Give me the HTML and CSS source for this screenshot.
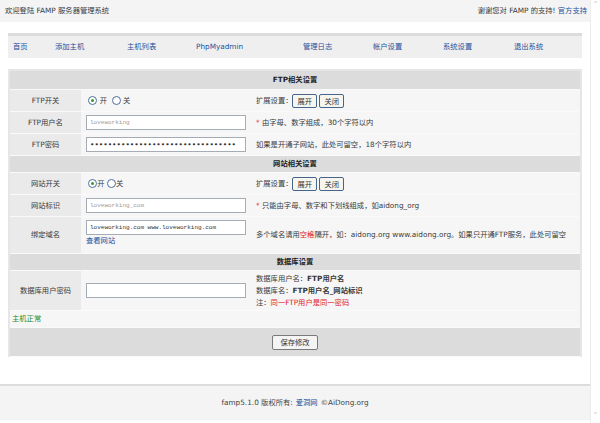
FILE: index.html
```html
<!DOCTYPE html>
<html lang="zh-CN">
<head>
    <meta charset="UTF-8">
    <meta name="viewport" content="width=device-width, initial-scale=1.0">
    <title>FAMP 服务器管理系统</title>
    <link rel="stylesheet" href="styles.css">
</head>
<body>
    <div class="page">
        <div class="main">
            <div class="topbar">
                <span>欢迎登陆 FAMP 服务器管理系统</span>
                <span>谢谢您对 FAMP 的支持! <a href="#">官方支持</a></span>
            </div>

            <ul class="nav">
                <li class="w1"><a href="#">首页</a></li>
                <li class="w2"><a href="#">添加主机</a></li>
                <li class="w3"><a href="#">主机列表</a></li>
                <li class="w4"><a href="#">PhpMyadmin</a></li>
                <li class="w5"><a href="#">管理日志</a></li>
                <li class="w5"><a href="#">帐户设置</a></li>
                <li class="w6"><a href="#">系统设置</a></li>
                <li><a href="#">退出系统</a></li>
            </ul>

            <div class="panel">
                <table class="form">
                    <colgroup>
                        <col class="col-label">
                        <col class="col-field">
                        <col>
                    </colgroup>
                    <tr class="section"><th colspan="3">FTP相关设置</th></tr>
                    <tr class="row">
                        <td class="label">FTP开关</td>
                        <td class="field">
                            &nbsp;<span class="radio checked"></span> 开 &nbsp;<span class="radio"></span> 关
                        </td>
                        <td class="desc">扩展设置：<button class="btn">展开</button> <button class="btn">关闭</button></td>
                    </tr>
                    <tr class="row">
                        <td class="label">FTP用户名</td>
                        <td class="field"><input type="text" class="txt muted" value="loveworking"></td>
                        <td class="desc"><span class="red">*</span> 由字母、数字组成，30个字符以内</td>
                    </tr>
                    <tr class="row">
                        <td class="label">FTP密码</td>
                        <td class="field"><input type="password" class="txt pass" value="123456789012345678901234567890123"></td>
                        <td class="desc">如果是开通子网站，此处可留空，18个字符以内</td>
                    </tr>

                    <tr class="section small"><th colspan="3">网站相关设置</th></tr>
                    <tr class="row">
                        <td class="label">网站开关</td>
                        <td class="field">
                            &nbsp;<span class="radio checked"></span>开 <span class="radio"></span>关
                        </td>
                        <td class="desc">扩展设置：<button class="btn">展开</button> <button class="btn">关闭</button></td>
                    </tr>
                    <tr class="row">
                        <td class="label">网站标识</td>
                        <td class="field"><input type="text" class="txt muted" value="loveworking_com"></td>
                        <td class="desc"><span class="red">*</span> 只能由字母、数字和下划线组成，如aidong_org</td>
                    </tr>
                    <tr class="row tall">
                        <td class="label">绑定域名</td>
                        <td class="field">
                            <input type="text" class="txt" value="loveworking.com www.loveworking.com">
                            <a href="#" class="view">查看网站</a>
                        </td>
                        <td class="desc nowrap">多个域名请用<span class="red">空格</span>隔开，如：aidong.org www.aidong.org。如果只开通FTP服务，此处可留空</td>
                    </tr>

                    <tr class="section small"><th colspan="3">数据库设置</th></tr>
                    <tr class="row db">
                        <td class="label">数据库用户密码</td>
                        <td class="field"><input type="text" class="txt"></td>
                        <td class="desc lines">
                            数据库用户名：<b>FTP用户名</b><br>
                            数据库名：<b>FTP用户名_网站标识</b><br>
                            注：<span class="red">同一FTP用户是同一密码</span>
                        </td>
                    </tr>
                    <tr class="status"><td colspan="3">主机正常</td></tr>
                    <tr class="submit"><td colspan="3"><button class="btn save">保存修改</button></td></tr>
                </table>
            </div>

            <div class="footer">
                famp5.1.0 版权所有: <a href="#">爱洞网</a> ©AiDong.org
            </div>
        </div>
        <div class="scrollbar">
            <span>&#x2c4;</span>
            <span>&#x2c5;</span>
        </div>
    </div>
</body>
</html>
```

FILE: styles.css
```css
body {
    margin: 0;
    background-color: #fff;
    font-family: "DejaVu Sans", "Noto Sans CJK SC", sans-serif;
    font-size: 7.3px;
    line-height: 1.3;
    color: #3a3a3a;
}

a {
    color: #24509c;
    text-decoration: none;
}

.page {
    display: flex;
    height: 423px;
}

.main {
    flex: 1;
}

.scrollbar {
    width: 9px;
    border-left: 1px solid #ececec;
    display: flex;
    flex-direction: column;
    justify-content: space-between;
    align-items: center;
    color: #c8c8c8;
    font-size: 9px;
    line-height: 10px;
    padding-bottom: 2px;
}

.topbar {
    height: 22px;
    display: flex;
    justify-content: space-between;
    align-items: center;
    padding: 0 3px 0 5px;
    background-color: #f4f4f4;
}

.nav {
    list-style: none;
    margin: 11px 8px 0;
    padding: 0 0 0 5px;
    height: 22px;
    display: flex;
    align-items: center;
    border-top: 3px solid #dcdcdc;
    background-color: #efefef;
}

.nav .w1 { width: 42px; }
.nav .w2 { width: 72px; }
.nav .w3 { width: 69px; }
.nav .w4 { width: 107px; }
.nav .w5 { width: 70px; }
.nav .w6 { width: 71px; }

.panel {
    margin: 11px 8px 0;
    border: 2px solid #e6e6e6;
    border-bottom: 0;
}

.form {
    width: 100%;
    border-collapse: collapse;
    table-layout: fixed;
}

.col-label {
    width: 71px;
}

.col-field {
    width: 169px;
}

.form td,
.form th {
    padding: 0;
    border-bottom: 1px solid #fafafa;
}

.section th {
    height: 18px;
    background-color: #dcdcdc;
    font-weight: bold;
    color: #222;
    text-align: center;
}

.section.small th {
    height: 16px;
}

.row td {
    height: 21px;
    background-color: #f6f6f6;
}

.row .label {
    text-align: center;
    background-color: #eaeaea;
}

.row .field {
    padding-left: 5px;
}

.row .desc {
    padding-left: 6px;
}

.desc.nowrap {
    white-space: nowrap;
}

.row.tall td {
    height: 33px;
}

.row.tall .field {
    vertical-align: top;
    padding-top: 3px;
}

.row.db td {
    height: 39px;
}

.desc.lines {
    line-height: 12px;
}

.view {
    display: block;
    margin-top: 1px;
    line-height: 10px;
}

.txt {
    box-sizing: border-box;
    width: 160px;
    height: 15px;
    margin: 0;
    padding: 0 3px;
    border: 1px solid #a5acb5;
    background-color: #fff;
    font-family: "Liberation Mono", monospace;
    font-size: 6px;
    color: #333;
    vertical-align: middle;
}

.txt.muted {
    color: #9a9a9a;
}

.txt.pass {
    font-family: "DejaVu Sans", sans-serif;
    font-size: 7.5px;
    letter-spacing: 0;
}

.radio {
    display: inline-block;
    width: 7px;
    height: 7px;
    border: 1px solid #4d6f98;
    border-radius: 50%;
    background-color: #fff;
    vertical-align: -2px;
    position: relative;
}

.radio.checked::after {
    content: "";
    position: absolute;
    left: 2px;
    top: 2px;
    width: 3px;
    height: 3px;
    border-radius: 50%;
    background-color: #2f9a2f;
}

.btn {
    height: 14px;
    padding: 0 4px;
    margin: 0;
    border: 1px solid #45658c;
    border-radius: 2px;
    background-color: #f6f5ee;
    font-family: inherit;
    font-size: 7.3px;
    color: #333;
    vertical-align: middle;
}

.red {
    color: #e0202a;
}

.status td {
    height: 16px;
    padding-left: 2px;
    background-color: #f6f6f6;
    color: #1e8a1e;
}

.submit td {
    height: 28px;
    text-align: center;
    background-color: #dcdcdc;
}

.btn.save {
    height: 15px;
    padding: 0 7px;
    border-color: #7a7a7a;
    background-color: #f4f4f4;
}

.footer {
    margin-top: 27px;
    height: 34px;
    border-top: 2px solid #dcdcdc;
    background-color: #f4f4f4;
    display: flex;
    justify-content: center;
    align-items: center;
    color: #444;
}

.footer a {
    margin: 0 3px;
}
```
